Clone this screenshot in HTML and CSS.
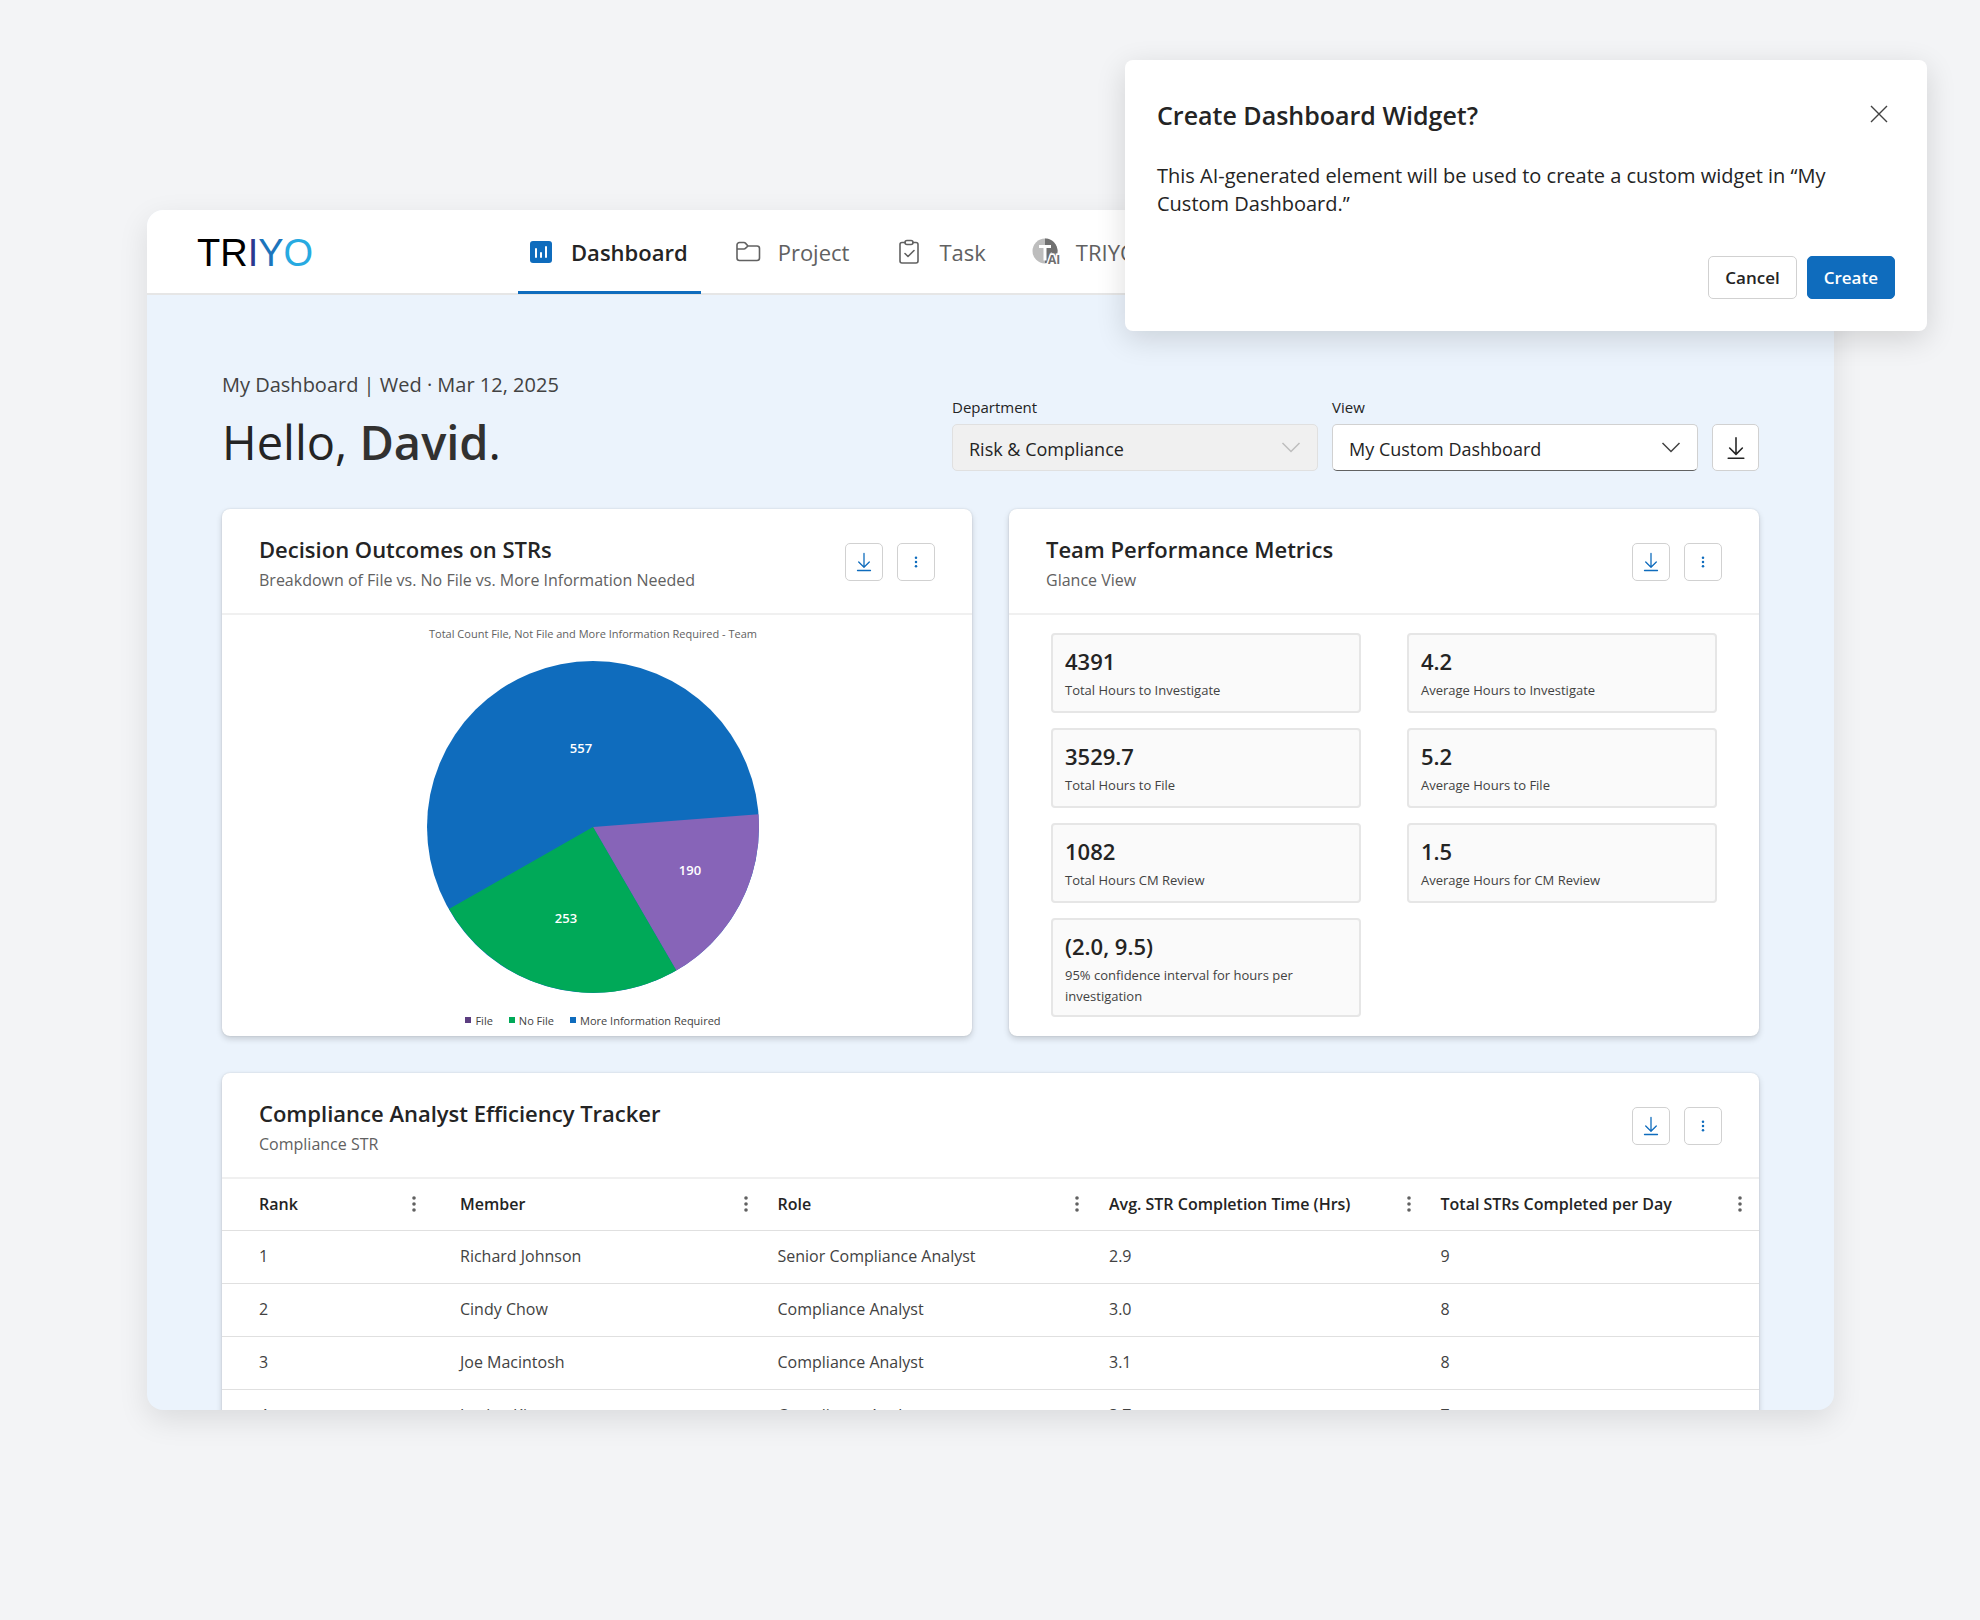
FILE: index.html
```html
<!DOCTYPE html>
<html lang="en">
<head>
    <meta charset="utf-8">
    <title>TRIYO Dashboard</title>
    <link rel="stylesheet" href="styles.css">
</head>
<body>

<!-- shared icons -->
<svg class="sprite" aria-hidden="true">
    <symbol id="icon-download" viewBox="0 0 20 20"><path d="M10 1.500v13.500M4.700 10l5.300 5.300L15.300 10M3.500 18.500h13" fill="none" stroke="currentColor" stroke-width="1.300" stroke-linecap="round" stroke-linejoin="round"/></symbol>
    <symbol id="icon-more" viewBox="0 0 20 20"><circle cx="10" cy="4" r="1.800"/><circle cx="10" cy="10" r="1.800"/><circle cx="10" cy="16" r="1.800"/></symbol>
</svg>

<div class="app">
    <header class="topbar">
        <div class="logo">TR<span class="logo-i">I</span><span class="logo-y">Y</span><span class="logo-o">O</span></div>
        <nav class="nav">
            <a href="#" class="nav-item active">
                <svg width="28" height="28" viewBox="0 0 28 28"><rect x="3" y="3" width="22" height="22" rx="3" fill="#0f6cbd"/><path d="M9 11v8M14 15v4M19 9v10" stroke="#fff" stroke-width="2" stroke-linecap="round"/></svg>
                Dashboard
            </a>
            <a href="#" class="nav-item">
                <svg width="28" height="28" viewBox="0 0 28 28" fill="none" stroke="currentColor" stroke-width="1.600" stroke-linejoin="round"><path d="M3 7a2.500 2.500 0 0 1 2.500-2.500h4.500a2 2 0 0 1 1.400.6L14 8h9a2.500 2.500 0 0 1 2.500 2.500v9.500a2.500 2.500 0 0 1-2.500 2.500H5.500A2.500 2.500 0 0 1 3 20zM3 11h7a2 2 0 0 0 1.400-.6L14 8"/></svg>
                Project
            </a>
            <a href="#" class="nav-item">
                <svg width="28" height="28" viewBox="0 0 28 28" fill="none" stroke="currentColor" stroke-width="1.600" stroke-linecap="round" stroke-linejoin="round"><path d="M10 4.500H7a2 2 0 0 0-2 2V23a2 2 0 0 0 2 2h14a2 2 0 0 0 2-2V6.500a2 2 0 0 0-2-2h-3"/><rect x="10" y="2.500" width="8" height="4" rx="2"/><path d="M10 15.500l3 3 6-6"/></svg>
                Task
            </a>
            <a href="#" class="nav-item">
                <svg width="28" height="28" viewBox="0 0 28 28"><circle cx="13" cy="13" r="12.500" fill="#bdbdbd"/><path d="M13 .5A12.500 12.500 0 0 1 24.500 18L19 14l-4 11H13z" fill="#707070"/><path d="M7 8.500h12M13 8.500v14" stroke="#fff" stroke-width="3"/><text x="16" y="26" class="ai-text">AI</text></svg>
                TRIYO AI
            </a>
        </nav>
    </header>

    <main class="content">
        <div class="page-head">
            <div>
                <p class="crumb">My Dashboard | Wed · Mar 12, 2025</p>
                <h1>Hello, <strong>David</strong>.</h1>
            </div>
            <div class="filters">
                <div class="field">
                    <label for="department">Department</label>
                    <div class="select disabled">
                        <select id="department" disabled><option>Risk &amp; Compliance</option></select>
                        <svg width="20" height="20" viewBox="0 0 20 20"><path d="M1.500 6l8.500 8.500L18.500 6"/></svg>
                    </div>
                </div>
                <div class="field">
                    <label for="view">View</label>
                    <div class="select">
                        <select id="view"><option>My Custom Dashboard</option></select>
                        <svg width="20" height="20" viewBox="0 0 20 20"><path d="M1.500 6l8.500 8.500L18.500 6"/></svg>
                    </div>
                </div>
                <button class="icon-btn large" aria-label="Download"><svg width="24" height="24"><use href="#icon-download"/></svg></button>
            </div>
        </div>

        <div class="cards">
            <section class="card">
                <div class="card-head">
                    <div>
                        <h2>Decision Outcomes on STRs</h2>
                        <p>Breakdown of File vs. No File vs. More Information Needed</p>
                    </div>
                    <div class="card-actions">
                        <button class="icon-btn" aria-label="Download"><svg width="20" height="20"><use href="#icon-download"/></svg></button>
                        <button class="icon-btn" aria-label="More"><svg width="14" height="14"><use href="#icon-more"/></svg></button>
                    </div>
                </div>
                <div class="chart">
                    <p class="chart-title">Total Count File, Not File and More Information Required - Team</p>
                    <svg class="pie" viewBox="-166 -166 332 332">
                        <circle r="166" fill="#0f6cbd"/>
                        <path d="M0 0L165.500 -12.700A166 166 0 0 1 83.300 143.600Z" fill="#8764b8"/>
                        <path d="M0 0L83.300 143.600A166 166 0 0 1 -144 82Z" fill="#00a958"/>
                        <text x="-12" y="-74">557</text>
                        <text x="97" y="48">190</text>
                        <text x="-27" y="96">253</text>
                    </svg>
                    <ul class="legend">
                        <li><i class="file"></i>File</li>
                        <li><i class="no-file"></i>No File</li>
                        <li><i class="more-info"></i>More Information Required</li>
                    </ul>
                </div>
            </section>

            <section class="card">
                <div class="card-head">
                    <div>
                        <h2>Team Performance Metrics</h2>
                        <p>Glance View</p>
                    </div>
                    <div class="card-actions">
                        <button class="icon-btn" aria-label="Download"><svg width="20" height="20"><use href="#icon-download"/></svg></button>
                        <button class="icon-btn" aria-label="More"><svg width="14" height="14"><use href="#icon-more"/></svg></button>
                    </div>
                </div>
                <div class="metrics">
                    <div class="metric"><strong>4391</strong><span>Total Hours to Investigate</span></div>
                    <div class="metric"><strong>4.2</strong><span>Average Hours to Investigate</span></div>
                    <div class="metric"><strong>3529.7</strong><span>Total Hours to File</span></div>
                    <div class="metric"><strong>5.2</strong><span>Average Hours to File</span></div>
                    <div class="metric"><strong>1082</strong><span>Total Hours CM Review</span></div>
                    <div class="metric"><strong>1.5</strong><span>Average Hours for CM Review</span></div>
                    <div class="metric"><strong>(2.0, 9.5)</strong><span>95% confidence interval for hours per investigation</span></div>
                </div>
            </section>
        </div>

        <section class="card">
            <div class="card-head">
                <div>
                    <h2>Compliance Analyst Efficiency Tracker</h2>
                    <p>Compliance STR</p>
                </div>
                <div class="card-actions">
                    <button class="icon-btn" aria-label="Download"><svg width="20" height="20"><use href="#icon-download"/></svg></button>
                    <button class="icon-btn" aria-label="More"><svg width="14" height="14"><use href="#icon-more"/></svg></button>
                </div>
            </div>
            <table class="tracker">
                <thead>
                    <tr>
                        <th><div>Rank <button aria-label="Rank options"><svg width="20" height="20"><use href="#icon-more"/></svg></button></div></th>
                        <th><div>Member <button aria-label="Member options"><svg width="20" height="20"><use href="#icon-more"/></svg></button></div></th>
                        <th><div>Role <button aria-label="Role options"><svg width="20" height="20"><use href="#icon-more"/></svg></button></div></th>
                        <th><div>Avg. STR Completion Time (Hrs) <button aria-label="Completion time options"><svg width="20" height="20"><use href="#icon-more"/></svg></button></div></th>
                        <th><div>Total STRs Completed per Day <button aria-label="Completed options"><svg width="20" height="20"><use href="#icon-more"/></svg></button></div></th>
                    </tr>
                </thead>
                <tbody>
                    <tr><td>1</td><td>Richard Johnson</td><td>Senior Compliance Analyst</td><td>2.9</td><td>9</td></tr>
                    <tr><td>2</td><td>Cindy Chow</td><td>Compliance Analyst</td><td>3.0</td><td>8</td></tr>
                    <tr><td>3</td><td>Joe Macintosh</td><td>Compliance Analyst</td><td>3.1</td><td>8</td></tr>
                    <tr><td>4</td><td>Jordan Kim</td><td>Compliance Analyst</td><td>3.7</td><td>7</td></tr>
                </tbody>
            </table>
        </section>
    </main>
</div>

<div class="dialog" role="dialog" aria-labelledby="dialog-title">
    <div class="dialog-head">
        <h2 id="dialog-title">Create Dashboard Widget?</h2>
        <button class="close" aria-label="Close"><svg width="18" height="18" viewBox="0 0 18 18"><path d="M1 1l16 16M17 1L1 17" stroke="currentColor" stroke-width="1.400"/></svg></button>
    </div>
    <p>This AI-generated element will be used to create a custom widget in “My Custom Dashboard.”</p>
    <div class="dialog-actions">
        <button class="btn">Cancel</button>
        <button class="btn primary">Create</button>
    </div>
</div>

</body>
</html>
```

FILE: styles.css
```css
* { box-sizing: border-box; }
body { margin: 0; padding: 210px 146px 210px 147px; min-height: 1620px; position: relative; background: #f3f4f6; color: #242424; font-family: "Open Sans", "Noto Sans", sans-serif; }
h1, h2, p, ul { margin: 0; padding: 0; font-weight: 400; }
button, select { font: inherit; color: inherit; }
.sprite { position: absolute; width: 0; height: 0; }

.app { height: 1200px; overflow: hidden; border-radius: 16px; background: #ebf3fc; box-shadow: 0 10px 30px rgba(0, 0, 0, 0.1); }

/* top bar */
.topbar { display: flex; height: 85px; padding-left: 50px; background: #fff; border-bottom: 2px solid #e6e6e6; }
.logo { width: 321px; font: 38px/86px "Liberation Sans", Arial, sans-serif; color: #000; }
.logo-i { color: #2b3990; }
.logo-y { color: #1c75bc; }
.logo-o { color: #27aae1; }
.nav { display: flex; gap: 24px; }
.nav-item { display: flex; align-items: center; gap: 16px; height: 84px; padding: 3px 13px 0 9px; border-bottom: 3px solid transparent; color: #616161; font-size: 22px; text-decoration: none; white-space: nowrap; }
.nav-item.active { border-color: #0f6cbd; color: #242424; font-weight: 600; }
.ai-text { font-size: 12px; font-weight: 700; fill: #707070; stroke: #fff; stroke-width: 3px; paint-order: stroke; }

/* page heading */
.content { padding: 76px 75px 0; }
.page-head { display: flex; justify-content: space-between; align-items: flex-end; margin-bottom: 38px; }
.crumb { font-size: 20px; line-height: 28px; color: #424242; }
h1 { margin-top: 14px; font-size: 47px; line-height: 58px; }
h1 strong { font-weight: 600; color: #323130; }
.filters { display: flex; align-items: flex-end; gap: 14px; }
.field label { display: block; margin-bottom: 6px; font-size: 15px; line-height: 22px; }
.select { position: relative; width: 366px; }
.select select { appearance: none; display: block; width: 100%; height: 47px; padding: 2px 16px 0; border: 1px solid #d1d1d1; border-bottom-color: #616161; border-radius: 5px; background: #fff; font-size: 18px; opacity: 1; }
.select svg { position: absolute; right: 17px; top: 13px; fill: none; stroke: #424242; stroke-width: 1.500; pointer-events: none; }
.select.disabled select { background: #f0f0f0; border-color: #e0e0e0; }
.select.disabled svg { stroke: #bdbdbd; }

.icon-btn { display: flex; align-items: center; justify-content: center; width: 38px; height: 38px; padding: 0; border: 1px solid #d1d1d1; border-radius: 5px; background: #fff; color: #0f6cbd; fill: #0f6cbd; }
.icon-btn.large { width: 47px; height: 47px; color: #242424; }

/* cards */
.cards { display: grid; grid-template-columns: 1fr 1fr; gap: 37px; margin-bottom: 37px; }
.card { border-radius: 8px; background: #fff; box-shadow: 0 0 2px rgba(0, 0, 0, 0.12), 0 3px 6px rgba(0, 0, 0, 0.16); overflow: hidden; }
.card-head { display: flex; justify-content: space-between; height: 106px; padding: 25px 37px 0; border-bottom: 2px solid #f0f0f0; }
.card-head h2 { font-size: 22px; line-height: 30px; font-weight: 600; }
.card-head p { margin-top: 5px; font-size: 16px; line-height: 22px; color: #616161; }
.card-actions { display: flex; gap: 14px; padding-top: 9px; }

.chart { display: flex; flex-direction: column; align-items: center; padding: 10px 8px 6px 0; }
.chart-title { margin-bottom: 18px; font-size: 11px; line-height: 18px; color: #616161; }
.pie { width: 332px; height: 332px; }
.pie text { fill: #fff; font-size: 13px; font-weight: 600; text-anchor: middle; }
.legend { display: flex; gap: 16px; margin-top: 19px; list-style: none; font-size: 11px; line-height: 18px; color: #424242; }
.legend li { display: flex; align-items: center; gap: 4px; }
.legend i { width: 6px; height: 6px; margin-bottom: 2px; }
.file { background: #5c3d80; }
.no-file { background: #00a958; }
.more-info { background: #0f6cbd; }

.metrics { display: grid; grid-template-columns: 1fr 1fr; gap: 15px 46px; padding: 18px 42px; }
.metric { min-height: 80px; padding: 11px 12px 8px; border: 2px solid #e6e6e6; border-radius: 4px; background: #fafafa; }
.metric strong { display: block; font-size: 22px; line-height: 30px; font-weight: 600; }
.metric span { display: block; margin-top: 4px; font-size: 13px; line-height: 21px; color: #424242; }

/* tracker table */
.tracker { width: 100%; table-layout: fixed; border-collapse: collapse; font-size: 16px; text-align: left; }
.tracker th, .tracker td { height: 53px; padding: 0 9px 2px 13px; border-bottom: 1px solid #e0e0e0; }
.tracker th { height: 51px; padding-bottom: 0; font-weight: 600; white-space: nowrap; }
.tracker th:nth-child(1) { width: 211px; }
.tracker th:nth-child(1), .tracker td:nth-child(1) { padding-left: 37px; }
.tracker th:nth-child(2), .tracker td:nth-child(2) { padding-left: 27px; }
.tracker th div { display: flex; align-items: center; justify-content: space-between; }
.tracker th button { display: flex; padding: 0; border: 0; background: none; fill: #616161; }
.tracker td { color: #424242; }

/* dialog floats above the app */
.dialog { position: absolute; top: 60px; right: 53px; width: 802px; padding: 37px 32px 32px; border-radius: 8px; background: #fff; box-shadow: 0 8px 30px rgba(0, 0, 0, 0.14); }
.dialog-head { display: flex; justify-content: space-between; }
.dialog h2 { font-size: 25px; line-height: 36px; font-weight: 600; }
.close { display: flex; align-items: center; height: 34px; padding: 0 7px; border: 0; background: none; color: #424242; }
.dialog p { margin-top: 29px; font-size: 20px; line-height: 28px; }
.dialog-actions { display: flex; justify-content: flex-end; gap: 10px; margin-top: 38px; }
.btn { height: 43px; padding: 0 16px; border: 1px solid #d1d1d1; border-radius: 5px; background: #fff; font-size: 17px; font-weight: 600; }
.btn.primary { border-color: #0f6cbd; background: #0f6cbd; color: #fff; }
```
